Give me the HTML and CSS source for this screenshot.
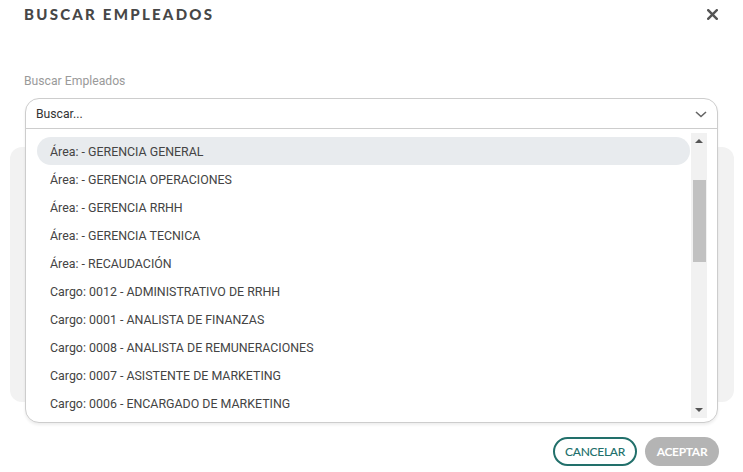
FILE: index.html
```html
<!DOCTYPE html>
<html lang="es">
<head>
<meta charset="utf-8">
<title>Buscar Empleados</title>
<link rel="stylesheet" href="styles.css">
</head>
<body>
<div class="dialog">
  <header class="dialog-header">
    <h1 class="dialog-title">BUSCAR EMPLEADOS</h1>
    <button class="close-btn" aria-label="Cerrar">
      <svg width="11" height="11" viewBox="0 0 11 11"><path d="M1.2 1.2 L9.8 9.8 M9.8 1.2 L1.2 9.8" stroke="#555" stroke-width="2.4" stroke-linecap="square" fill="none"/></svg>
    </button>
  </header>

  <div class="dialog-body">
    <label class="field-label">Buscar Empleados</label>
    <div class="field">
      <div class="dropdown">
        <div class="dropdown-input">
          <span class="placeholder">Buscar...</span>
          <svg class="chevron" width="12" height="7" viewBox="0 0 12 7"><path d="M1 1 L6 5.5 L11 1" stroke="#666" stroke-width="1.6" fill="none"/></svg>
        </div>
        <div class="dropdown-menu">
          <ul class="options">
            <li class="option active">Área: - GERENCIA GENERAL</li>
            <li class="option">Área: - GERENCIA OPERACIONES</li>
            <li class="option">Área: - GERENCIA RRHH</li>
            <li class="option">Área: - GERENCIA TECNICA</li>
            <li class="option">Área: - RECAUDACIÓN</li>
            <li class="option">Cargo: 0012 - ADMINISTRATIVO DE RRHH</li>
            <li class="option">Cargo: 0001 - ANALISTA DE FINANZAS</li>
            <li class="option">Cargo: 0008 - ANALISTA DE REMUNERACIONES</li>
            <li class="option">Cargo: 0007 - ASISTENTE DE MARKETING</li>
            <li class="option">Cargo: 0006 - ENCARGADO DE MARKETING</li>
          </ul>
          <div class="scrollbar">
            <span class="arrow up"></span>
            <span class="thumb"></span>
            <span class="arrow down"></span>
          </div>
        </div>
      </div>
    </div>
    <div class="card"></div>
  </div>

  <footer class="dialog-footer">
    <button class="btn btn-outline">CANCELAR</button>
    <button class="btn btn-disabled">ACEPTAR</button>
  </footer>
</div>
</body>
</html>
```

FILE: styles.css
```css
* { box-sizing: border-box; }
html, body { margin: 0; padding: 0; background: #fff; }
body { font-family: Roboto, "Liberation Sans", sans-serif; width: 743px; height: 472px; overflow: hidden; }

.dialog { width: 743px; height: 472px; display: flex; flex-direction: column; }

.dialog-header {
  height: 30px;
  display: flex;
  align-items: center;
  justify-content: space-between;
  padding: 0 24px 2px 24px;
}
.dialog-title {
  margin: 0;
  font-family: Lato, "Liberation Sans", sans-serif;
  font-weight: 900;
  font-size: 15px;
  letter-spacing: 2.25px;
  color: #474747;
}
.close-btn {
  border: 0;
  background: none;
  padding: 0;
  margin-right: 1px;
  width: 11px;
  height: 11px;
  display: flex;
  cursor: pointer;
}

.dialog-body { padding: 43px 0 0 0; }
.field-label {
  display: block;
  margin-left: 24px;
  font-size: 12.2px;
  line-height: 16px;
  color: #9a9a9a;
}
.field {
  position: relative;
  margin: 9px 25px 0 25px;
  height: 31px;
}
.dropdown {
  position: absolute;
  left: 0; top: 0;
  width: 693px;
  height: 325px;
  border: 1.5px solid #cdcdcd;
  border-radius: 14px;
  background: #fff;
  box-shadow: 0 2px 3px rgba(0,0,0,0.07);
  z-index: 2;
  display: flex;
  flex-direction: column;
  overflow: hidden;
}
.dropdown-input {
  height: 30px;
  flex: none;
  border-bottom: 1.5px solid #cdcdcd;
  display: flex;
  align-items: center;
  justify-content: space-between;
  padding: 0 10px 0 10px;
}
.placeholder { font-size: 12.2px; color: #333; }
.chevron { margin-top: 2px; }

.dropdown-menu {
  flex: 1;
  display: flex;
  padding: 4px 10px 0 11px;
}
.options {
  list-style: none;
  margin: 4px 0 0 0;
  padding: 0;
  flex: 1;
}
.option {
  height: 28px;
  display: flex;
  align-items: center;
  padding-left: 13px;
  font-size: 12.4px;
  color: #444;
  border-radius: 14px;
  margin-right: 1px;
}
.option.active { background: #e8ebee; height: 28px; }

.scrollbar {
  width: 16px;
  height: 285px;
  background: #f1f1f1;
  display: flex;
  flex-direction: column;
  align-items: center;
  padding: 6px 0;
}
.arrow { width: 0; height: 0; border-left: 4px solid transparent; border-right: 4px solid transparent; }
.arrow.up { border-bottom: 4px solid #555; }
.arrow.down { border-top: 4px solid #555; margin-top: auto; }
.thumb {
  width: 13px;
  height: 82px;
  background: #c1c1c1;
  margin-top: 37px;
}

.card {
  margin: 18px 9px 0 10px;
  height: 255px;
  background: #f2f2f2;
  border-radius: 12px;
}

.dialog-footer {
  display: flex;
  justify-content: flex-end;
  gap: 8px;
  padding: 35px 24px 0 0;
}
.btn {
  height: 29px;
  border-radius: 15px;
  font-family: Lato, "Liberation Sans", sans-serif;
  font-size: 12px;
  font-weight: 700;
  padding: 0 10px;
  cursor: pointer;
  letter-spacing: -0.3px;
}
.btn-outline {
  width: 84px;
  background: #fff;
  border: 2px solid #22706b;
  color: #22706b;
  font-weight: 500;
}
.btn-disabled {
  width: 74px;
  background: #b4b4b4;
  border: 0;
  color: #fff;
}
```
